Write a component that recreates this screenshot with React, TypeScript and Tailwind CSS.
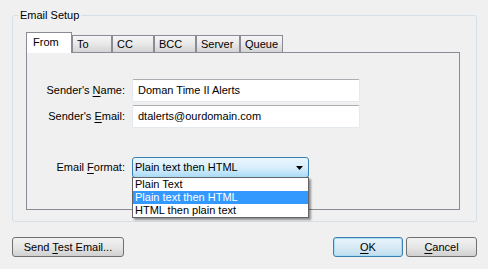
import React from "react";

const U = ({ children }: { children: React.ReactNode }) => (
  <span className="underline underline-offset-[2px] decoration-[1px]">{children}</span>
);

function Tab({ label, w, active }: { label: string; w: string; active?: boolean }) {
  if (active) {
    return (
      <div
        className={`${w} h-[21px] -mb-px relative z-10 bg-white border-t border-l border-r border-[#898c95] pl-[6px] pt-[3px] leading-[13px] shrink-0`}
      >
        {label}
      </div>
    );
  }
  return (
    <div
      className={`${w} h-[17px] border-t border-l border-r border-[#898c95] bg-gradient-to-b from-[#f6f6f6] via-[#e8e8e8] to-[#d4d4d4] pl-[4px] pt-[2px] leading-[13px] shrink-0`}
    >
      {label}
    </div>
  );
}

export default function App() {
  return (
    <div className="w-[488px] h-[269px] bg-[#f0f0f0] text-[11px] text-black font-['Liberation_Sans',Arial,sans-serif] flex flex-col overflow-hidden">
      <fieldset className="ml-[12px] mt-[9px] w-[465px] h-[213px] border border-[#d5dfe5] rounded-[3px] m-0 p-0 min-w-0">
        <legend className="ml-[5px] px-[2px] leading-[13px]">Email Setup</legend>
        <div className="pl-[13px] pt-[10px]">
          <div className="flex items-end h-[20px]">
            <Tab label="From" w="w-[46px]" active />
            <Tab label="To" w="w-[40px]" />
            <Tab label="CC" w="w-[42px]" />
            <Tab label="BCC" w="w-[42px]" />
            <Tab label="Server" w="w-[44px]" />
            <Tab label="Queue" w="w-[43px]" />
          </div>
          <div className="w-[434px] h-[158px] border border-[#898c95] bg-[#f0f0f0] pt-[26px]">
            <div className="grid grid-cols-[98px_auto] gap-x-[7px] gap-y-[3px] items-center">
              <div className="text-right leading-[13px]">
                Sender's <U>N</U>ame:
              </div>
              <div className="w-[228px] h-[23px] bg-white border border-[#e3e9ef] border-t-[#abadb3] rounded-[2px] pl-[5px] flex items-center leading-[13px]">
                Doman Time II Alerts
              </div>
              <div className="text-right leading-[13px]">
                Sender's <U>E</U>mail:
              </div>
              <div className="w-[228px] h-[23px] bg-white border border-[#e3e9ef] border-t-[#abadb3] rounded-[2px] pl-[5px] flex items-center leading-[13px]">
                dtalerts@ourdomain.com
              </div>
            </div>
            <div className="grid grid-cols-[98px_auto] gap-x-[7px] items-center mt-[29px]">
              <div className="text-right leading-[13px]">
                Email <U>F</U>ormat:
              </div>
              <div className="relative w-[177px]">
                <div className="h-[21px] rounded-[3px] border border-[#3c7fb1] bg-gradient-to-b from-[#eaf6fd] via-[#d9effc] to-[#a9dbf6] flex items-center justify-between pl-[2px] pr-[5px] leading-[13px]">
                  <span>Plain text then HTML</span>
                  <svg width="7" height="4" viewBox="0 0 7 4">
                    <path d="M0 0 H7 L3.5 4 Z" fill="#000" />
                  </svg>
                </div>
                <div className="absolute left-0 top-[20px] w-[177px] bg-white border border-[#646464] shadow-[2px_2px_2px_rgba(0,0,0,0.4)] z-20 leading-[13px]">
                  <div className="h-[13px] pl-[2px]">Plain Text</div>
                  <div className="h-[13px] pl-[2px] bg-[#3399ff] text-white">Plain text then HTML</div>
                  <div className="h-[13px] pl-[2px]">HTML then plain text</div>
                </div>
              </div>
            </div>
          </div>
        </div>
      </fieldset>
      <div className="flex items-center mt-[15px] pl-[12px]">
        <button className="w-[112px] h-[20px] rounded-[3px] border border-[#707070] bg-gradient-to-b from-[#f2f2f2] via-[#e6e6e6] to-[#d0d0d0] leading-[13px]">
          Send <U>T</U>est Email...
        </button>
        <button className="ml-[209px] w-[70px] h-[20px] rounded-[3px] border border-[#3c7fb1] bg-gradient-to-b from-[#e9f4fb] via-[#d8eaf5] to-[#c2ddee] shadow-[inset_0_0_0_1px_#a9dcf5] leading-[13px]">
          <U>O</U>K
        </button>
        <button className="ml-[3px] w-[71px] h-[20px] rounded-[3px] border border-[#707070] bg-gradient-to-b from-[#f2f2f2] via-[#e6e6e6] to-[#d0d0d0] leading-[13px]">
          <U>C</U>ancel
        </button>
      </div>
    </div>
  );
}
